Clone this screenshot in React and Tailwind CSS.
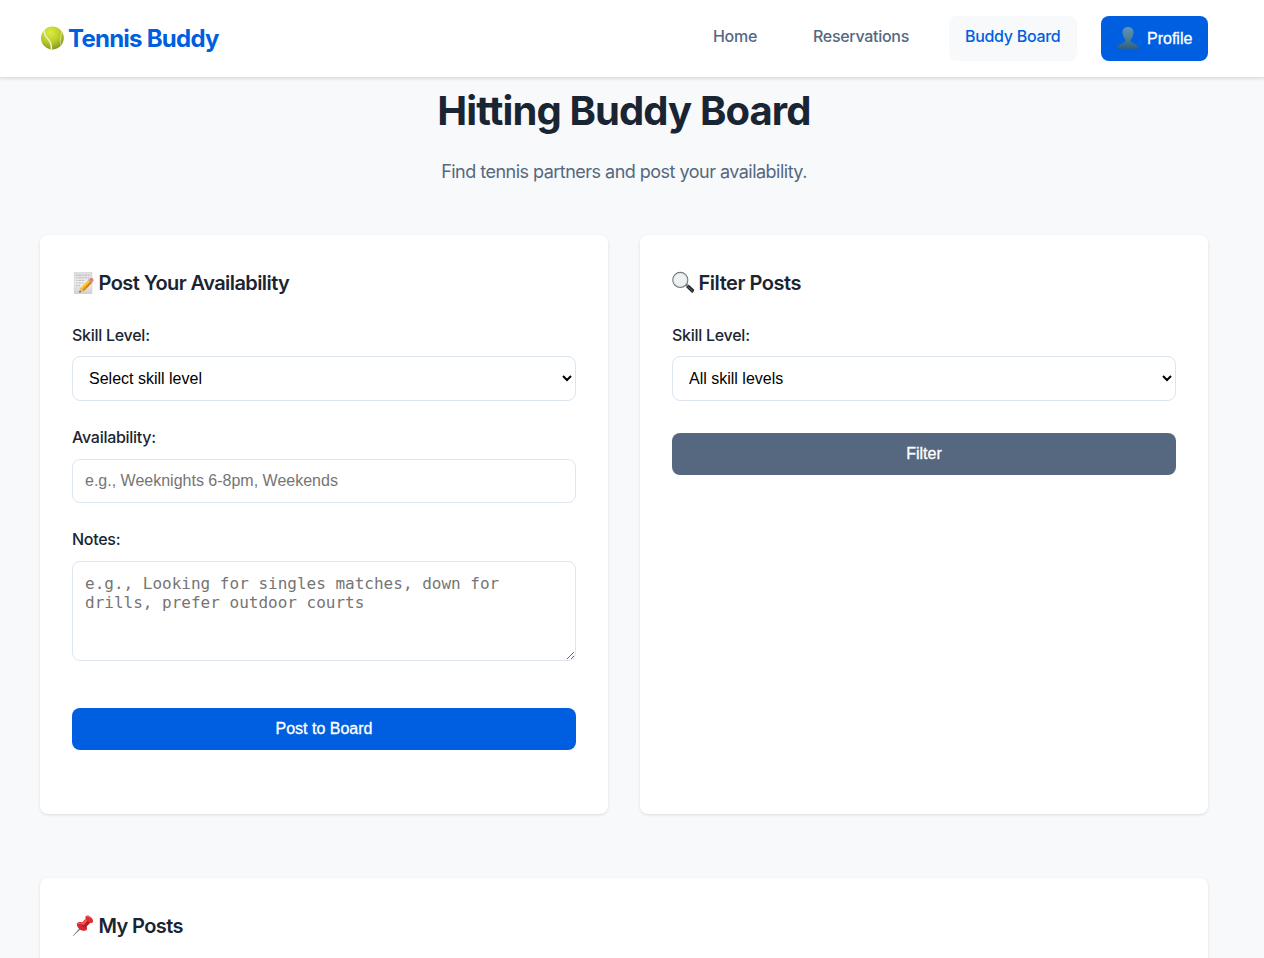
import React from "react";

function TennisBall() {
  return (
    <svg viewBox="0 0 24 24" className="mb-px size-6 shrink-0" aria-hidden="true">
      <defs>
        <radialGradient id="ball" cx="40%" cy="25%" r="80%">
          <stop offset="0" stopColor="#dcec3c" />
          <stop offset="0.55" stopColor="#b9cc2c" />
          <stop offset="1" stopColor="#7f9418" />
        </radialGradient>
        <clipPath id="ballClip"><circle cx="12.4" cy="12" r="11.4" /></clipPath>
      </defs>
      <circle cx="12.4" cy="12" r="11.4" fill="url(#ball)" />
      <g clipPath="url(#ballClip)" fill="none" stroke="#eef1d0" strokeWidth="1.5">
        <path d="M4.200 3.200C3.800 8 5.500 10.500 8 13s3.800 6 3.300 11" />
        <path d="M21.500 4c.3 3.500-.6 6.500-1 9s-.2 4 .4 6" strokeWidth="0.9" strokeOpacity="0.7" />
      </g>
    </svg>
  );
}

function Memo() {
  return (
    <svg viewBox="0 0 22 24" className="mb-px h-6 w-[22px] shrink-0" aria-hidden="true">
      <defs>
        <linearGradient id="paper" x1="0" y1="0" x2="0" y2="1">
          <stop offset="0" stopColor="#dedede" />
          <stop offset="0.5" stopColor="#f1f1f1" />
          <stop offset="1" stopColor="#cfcfcf" />
        </linearGradient>
      </defs>
      <rect x="2.200" y="1.700" width="17.800" height="21" fill="url(#paper)" stroke="#c6c6c6" strokeWidth="0.5" />
      <g stroke="#a2a2a2" strokeWidth="0.7" strokeDasharray="1.600 0.9 2.800 0.7">
        <path d="M4 4.200h14M4 6.800h13M4 9.400h9M4 12h8M4 14.600h4" />
      </g>
      <path d="M7.300 21.600l1.200-4.600L17 8.300l3.300 3.200-8.600 8.600z" fill="#f3a91f" />
      <path d="M8.500 17L17 8.300l1.100 1.100-8.600 8.700z" fill="#ffcf4d" />
      <path d="M10.700 19.400l8.500-8.800 1.100.9-8.600 8.600z" fill="#c97510" />
      <path d="M7.300 21.600l1.200-4.600 3.200 3.100z" fill="#e3bd84" />
      <path d="M7.300 21.600l.5-1.800 1.300 1.200z" fill="#3c3225" />
      <path d="M16.200 9.100l1.200-1.200 3.200 3.200-1.200 1.200z" fill="#99a5ad" />
      <path d="M17.400 7.900l.9-.8c1.600-1 4 1.300 3 2.900l-.8 1z" fill="#ec7182" />
    </svg>
  );
}

function Magnifier() {
  return (
    <svg viewBox="0 0 24 24" className="mb-px size-6 shrink-0" aria-hidden="true">
      <path d="M12.800 14l2-2 2.200 2.400-2 2z" fill="#85898b" />
      <path d="M14.200 16.300l2.700-2.600 4.800 4.500c.8.900.1 3.300-1.600 3.700z" fill="#252a2b" />
      <path d="M15.700 15.400l5 4.800" stroke="#6e7577" strokeWidth="0.8" />
      <circle cx="8.300" cy="8.900" r="7.500" fill="#edf1f2" stroke="#6f797d" strokeWidth="1.200" />
      <circle cx="8.300" cy="8.900" r="6.600" fill="none" stroke="#d5dfe2" strokeWidth="0.6" />
    </svg>
  );
}

function Pin() {
  return (
    <svg viewBox="0 0 22 24" className="mb-px h-6 w-[22px] shrink-0" aria-hidden="true">
      <path d="M1.200 21.800L8 13.500l1.400 1.200z" fill="#899ca6" />
      <path d="M1.200 21.800l7.200-7.700" stroke="#607987" strokeWidth="0.8" />
      <path d="M5.300 9c2-1.800 4.600-1.300 7 .6 2.700 2.200 3.700 5.200 1.900 7-3 .6-5.900-.6-7.400-2.200-1.700-1.800-2.600-3.800-1.500-5.400z" fill="#d6282d" />
      <path d="M9.200 9.400l5.500-5.600 4.200 4.500-5.400 5.200c-2 .1-4.300-1.800-4.300-4.100z" fill="#b91925" />
      <path d="M9.400 9.500l5.200-5.400 1.800 1.700-5.100 5.600z" fill="#ef5750" />
      <path d="M13.700 2.200c1.400-1.300 3.500-.6 5.300 1s2.700 3.900 1.700 5.300c-1.500 1-3.600-.1-5.200-1.600s-2.600-3.300-1.800-4.700z" fill="#e52c31" />
      <path d="M14.700 2.700c1.500-.8 3 0 4.300 1.200" fill="none" stroke="#ff8278" strokeWidth="0.8" />
      <path d="M6 9.900c1.500-1 3-.5 4.200.3" fill="none" stroke="#f87870" strokeWidth="0.8" />
    </svg>
  );
}

function Silhouette() {
  return (
    <svg viewBox="0 0 22 22" className="mb-px size-[22px] shrink-0" aria-hidden="true">
      <defs>
        <linearGradient id="person" x1="0" y1="0" x2="0" y2="1">
          <stop offset="0" stopColor="#6293b5" />
          <stop offset="0.6" stopColor="#477c98" />
          <stop offset="1" stopColor="#345d7c" />
        </linearGradient>
      </defs>
      <path d="M11 0C7.500 0 5.300 2.300 5.500 5.600c.1 3 1.100 5.300 2.700 6.600.3 1.800-.2 2.800-1.300 3.400C4.200 17 .8 17.300 0 21.700h22c-.8-4.400-4.200-4.700-6.900-6.100-1.100-.6-1.600-1.600-1.300-3.400 1.600-1.300 2.600-3.600 2.700-6.600C16.700 2.300 14.500 0 11 0z" fill="url(#person)" />
    </svg>
  );
}

const card = "rounded-lg bg-white px-8 shadow-[0_1px_3px_rgba(0,0,0,0.12)]";
const heading = "flex h-8 items-center text-[20px] font-semibold";
const label = "block h-6 text-[16px] leading-6 font-medium tracking-[-0.27px]";
const field = "block w-full rounded-lg border border-[#dde5ee] bg-white p-3 text-[16px]";
const button = "block h-[42px] w-full rounded-lg font-['Liberation_Sans',sans-serif] text-[16px] leading-[18px] text-white [-webkit-text-stroke:0.3px_white]";

export default function App() {
  return (
    <div className="h-[958px] overflow-hidden bg-[#f8f9fb] font-[Inter,sans-serif] text-[#1a2533] antialiased">
      <nav className="flex h-[78px] items-center justify-between border-b border-[#dde4ea] bg-white pr-14 pl-10 shadow-[0_1px_3px_rgba(0,0,0,0.12)]">
        <div className="flex items-center text-[24px] leading-8 font-bold text-[#005fe0]">
          <TennisBall />
          <span className="ml-1 tracking-[-0.75px]">Tennis Buddy</span>
        </div>
        <div className="flex h-[45px] gap-6 text-[16px] leading-6 font-medium text-[#55687f]">
          <a className="w-[76px] px-4 pt-2 tracking-[-0.3px] whitespace-nowrap">Home</a>
          <a className="w-32 px-4 pt-2 tracking-[-0.3px] whitespace-nowrap">Reservations</a>
          <a className="w-32 rounded-lg bg-[#f8f9fb] px-4 pt-2 tracking-[-0.3px] whitespace-nowrap text-[#005fe0]">Buddy Board</a>
          <button className="flex w-[107px] items-center rounded-lg bg-[#005fe0] px-4 font-['Liberation_Sans',sans-serif] font-normal text-white [-webkit-text-stroke:0.3px_white]">
            <Silhouette />
            <span className="ml-2">Profile</span>
          </button>
        </div>
      </nav>

      <main className="pr-14 pl-10">
        <header className="flex h-[157px] flex-col items-center pt-2">
          <h1 className="text-[40px] leading-[50px] font-bold tracking-[-0.88px] whitespace-nowrap">Hitting Buddy Board</h1>
          <p className="mt-[22px] text-[18px] leading-7 tracking-[-0.52px] whitespace-nowrap text-[#55687f]">
            Find tennis partners and post your availability.
          </p>
        </header>

        <div className="grid h-[579px] grid-cols-2 gap-8">
          <section className={card + " pt-8"}>
            <h2 className={heading}>
              <Memo />
              <span className="ml-[4.500px] tracking-[-0.57px]">Post Your Availability</span>
            </h2>
            <label className={label + " mt-6"}>Skill Level:</label>
            <select className={field + " mt-[9px] h-[45px] font-['Liberation_Sans',sans-serif] text-black"}>
              <option>Select skill level</option>
            </select>
            <label className={label + " mt-6"}>Availability:</label>
            <input
              className={field + " mt-[10px] h-11 font-['Liberation_Sans',sans-serif] placeholder:text-[#757575]"}
              placeholder="e.g., Weeknights 6-8pm, Weekends"
            />
            <label className={label + " mt-6"}>Notes:</label>
            <textarea
              className={field + " mt-[10px] h-[100px] resize-y font-['DejaVu_Sans_Mono',monospace] leading-[19px] placeholder:text-[#757575]"}
              placeholder="e.g., Looking for singles matches, down for drills, prefer outdoor courts"
            />
            <button className={button + " mt-[47px] bg-[#005fe0]"}>Post to Board</button>
          </section>

          <section className={card + " pt-8"}>
            <h2 className={heading}>
              <Magnifier />
              <span className="ml-[2.500px] tracking-[-0.45px]">Filter Posts</span>
            </h2>
            <label className={label + " mt-6"}>Skill Level:</label>
            <select className={field + " mt-[9px] h-[45px] font-['Liberation_Sans',sans-serif] text-black"}>
              <option>All skill levels</option>
            </select>
            <button className={button + " mt-8 bg-[#55687f]"}>Filter</button>
          </section>
        </div>

        <section className={card + " mt-16 h-60 pt-8"}>
          <h2 className={heading}>
            <Pin />
            <span className="ml-[4.500px] tracking-[-0.6px]">My Posts</span>
          </h2>
        </section>
      </main>
    </div>
  );
}
